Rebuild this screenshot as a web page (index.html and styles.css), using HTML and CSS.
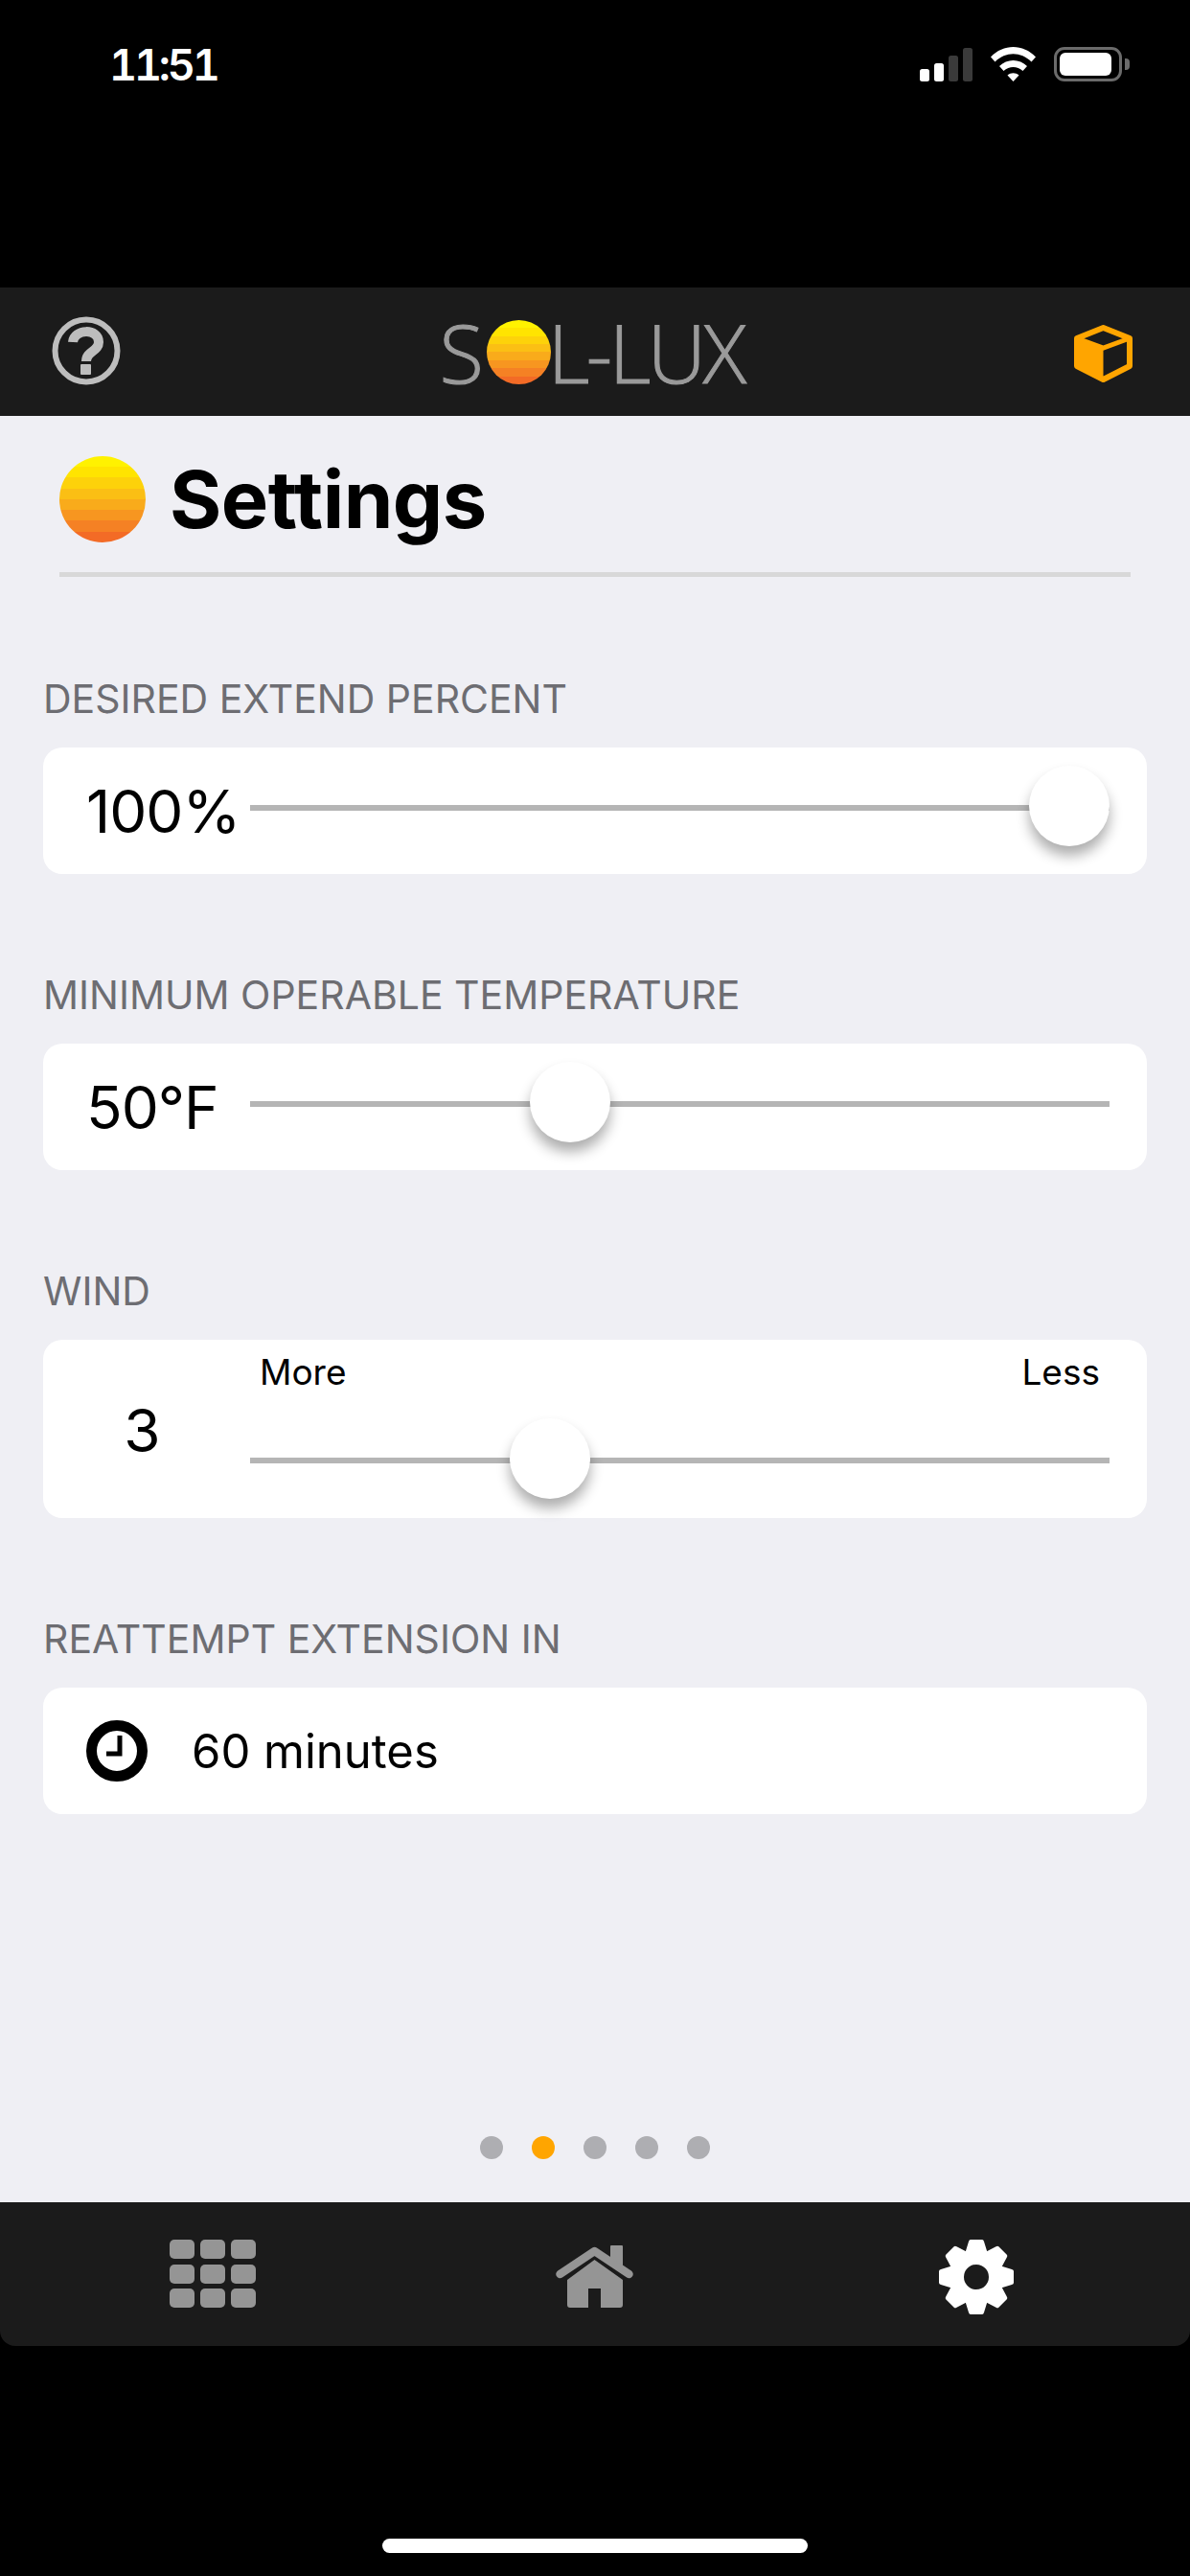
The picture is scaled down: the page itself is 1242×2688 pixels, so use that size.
FILE: index.html
```html
<!DOCTYPE html>
<html lang="en">
<head>
<meta charset="utf-8">
<title>Sol-Lux Settings</title>
<link rel="stylesheet" href="styles.css">
</head>
<body>
<div class="phone">
  <div class="status">
    <span class="time">11:51</span>
    <div class="status-icons">
      <div class="signal"><i class="b1"></i><i class="b2"></i><i class="b3"></i><i class="b4"></i></div>
      <svg class="wifi" width="47" height="36" viewBox="0 0 47 36"><path d="M0 10.5C13 -3.5 34 -3.5 47 10.5L42.5 15.5C31.5 4.5 15.5 4.5 4.5 15.5Z" fill="#fff"/><path d="M9 20C17 12 30 12 38 20L33.5 25C27.5 19.5 19.5 19.5 13.5 25Z" fill="#fff"/><path d="M17.5 29.5C21 26.5 26 26.5 29.5 29.5L23.5 36Z" fill="#fff"/></svg>
      <div class="battery"><div class="battery-fill"></div></div>
      <div class="battery-cap"></div>
    </div>
  </div>

  <header class="topbar">
    <svg class="help" width="72" height="72" viewBox="0 0 72 72"><circle cx="36" cy="36" r="32.5" fill="none" stroke="#bdbdbd" stroke-width="6"/><path d="M22 27C23 13 49 12 49 27C49 37 36 36 36 47" fill="none" stroke="#bdbdbd" stroke-width="10"/><rect x="30" y="50" width="11" height="11" rx="1" fill="#bdbdbd"/></svg>
    <div class="logo">
      <span class="logo-s">S</span><span class="sun sun-small"></span><span class="logo-rest">L-LUX</span>
    </div>
    <svg class="cube" width="61" height="60" viewBox="0 0 61 60"><path d="M30.5 3L58 14V43L30.5 57L3 43V14Z" fill="none" stroke="#ffa500" stroke-width="6" stroke-linejoin="round"/><path d="M3 14L30.5 24V57L3 43Z" fill="#ffa500"/><path d="M3 14L30.5 24L58 14" fill="none" stroke="#ffa500" stroke-width="5"/></svg>
  </header>

  <main class="content">
    <div class="title-row">
      <span class="sun sun-large"></span>
      <h1 class="title">Settings</h1>
    </div>

    <section class="group">
      <h2 class="group-label">DESIRED EXTEND PERCENT</h2>
      <div class="card">
        <span class="value">100%</span>
        <div class="slider"><div class="track"></div><div class="thumb" style="left: 100%"></div></div>
      </div>
    </section>

    <section class="group">
      <h2 class="group-label">MINIMUM OPERABLE TEMPERATURE</h2>
      <div class="card">
        <span class="value">50°F</span>
        <div class="slider"><div class="track"></div><div class="thumb" style="left: 41.9%"></div></div>
      </div>
    </section>

    <section class="group">
      <h2 class="group-label">WIND</h2>
      <div class="card card-wind">
        <span class="value value-center">3</span>
        <div class="wind-col">
          <div class="wind-ends"><span>More</span><span>Less</span></div>
          <div class="slider"><div class="track"></div><div class="thumb" style="left: 39.6%"></div></div>
        </div>
      </div>
    </section>

    <section class="group">
      <h2 class="group-label">REATTEMPT EXTENSION IN</h2>
      <div class="card card-time">
        <svg class="clock" width="64" height="64" viewBox="0 0 64 64"><circle cx="32" cy="32" r="26.5" fill="none" stroke="#000" stroke-width="11"/><path d="M35 16V35H21" fill="none" stroke="#000" stroke-width="5"/></svg>
        <span class="time-value">60 minutes</span>
      </div>
    </section>

    <div class="dots"><i class="dot"></i><i class="dot dot-on"></i><i class="dot"></i><i class="dot"></i><i class="dot"></i></div>
  </main>

  <nav class="tabbar">
    <svg class="tab" width="90" height="72" viewBox="0 0 90 72" fill="#959595">
      <rect x="0" y="0" width="26" height="20" rx="5"/><rect x="32" y="0" width="26" height="20" rx="5"/><rect x="64" y="0" width="26" height="20" rx="5"/>
      <rect x="0" y="26" width="26" height="20" rx="5"/><rect x="32" y="26" width="26" height="20" rx="5"/><rect x="64" y="26" width="26" height="20" rx="5"/>
      <rect x="0" y="51" width="26" height="20" rx="5"/><rect x="32" y="51" width="26" height="20" rx="5"/><rect x="64" y="51" width="26" height="20" rx="5"/>
    </svg>
    <svg class="tab tab-home" width="81" height="65" viewBox="0 0 81 65" fill="#959595">
      <rect x="57" y="0" width="13" height="22" rx="1"/>
      <path d="M4.5 30L40.5 6L76.5 30" fill="none" stroke="#959595" stroke-width="8.5" stroke-linecap="round" stroke-linejoin="round"/>
      <path d="M12 36L40.5 15L70 36V62Q70 65 67 65H47V45H34V65H15Q12 65 12 62Z"/>
    </svg>
    <svg class="tab tab-gear" width="78" height="78" viewBox="-39 -39 78 78" fill="#fff">
      <circle r="20.5" fill="none" stroke="#fff" stroke-width="15"/>
      <path id="tooth" d="M-12 -24L-8 -37Q-7.5 -39 -6 -39H6Q7.5 -39 8 -37L12 -24Z"/>
      <use href="#tooth" transform="rotate(45)"/><use href="#tooth" transform="rotate(90)"/><use href="#tooth" transform="rotate(135)"/>
      <use href="#tooth" transform="rotate(180)"/><use href="#tooth" transform="rotate(225)"/><use href="#tooth" transform="rotate(270)"/><use href="#tooth" transform="rotate(315)"/>
    </svg>
  </nav>

  <div class="home-area"><div class="home-indicator"></div></div>
</div>
</body>
</html>
```
FILE: styles.css
```css
* { box-sizing: border-box; }
html, body { margin: 0; padding: 0; background: #000; }
.phone {
  width: 1242px;
  height: 2688px;
  background: #000;
  display: flex;
  flex-direction: column;
  font-family: Inter, "Liberation Sans", sans-serif;
  color: #000;
}

/* status bar */
.status {
  height: 300px;
  flex: none;
  display: flex;
  justify-content: space-between;
  align-items: flex-start;
  padding: 49px 63px 0 114px;
  color: #fff;
}
.time { font-size: 45px; line-height: 37px; font-weight: 600; font-variant-numeric: tabular-nums; letter-spacing: -3.2px; }
.status-icons { display: flex; align-items: flex-start; }
.signal { display: flex; align-items: flex-end; gap: 5px; height: 36px; margin-right: 19px; }
.signal i { display: block; width: 10px; border-radius: 2.5px; background: #fff; }
.signal .b1 { height: 13px; }
.signal .b2 { height: 19px; }
.signal .b3 { height: 27px; background: #3a3a3a; }
.signal .b4 { height: 35px; background: #3a3a3a; }
.wifi { margin-right: 19px; }
.battery {
  width: 71px;
  height: 36px;
  border: 3.5px solid #6b6b6b;
  border-radius: 11px;
  padding: 3px;
}
.battery-fill { width: 54px; height: 100%; background: #fff; border-radius: 6px; }
.battery-cap { width: 5px; height: 12px; margin: 12px 0 0 3px; background: #6b6b6b; border-radius: 0 4px 4px 0; }

/* top bar */
.topbar {
  height: 134px;
  flex: none;
  background: #1b1b1b;
  display: grid;
  grid-template-columns: 1fr auto 1fr;
  align-items: center;
  padding: 0 60px 0 54px;
}
.help { justify-self: start; margin-top: -3px; }
.cube { justify-self: end; margin-top: 3px; }
.logo {
  display: flex;
  align-items: center;
  color: #9a9a9a;
  font-family: "Open Sans", Lato, sans-serif;
  font-weight: 300;
  font-size: 85px;
  line-height: 67px;
  -webkit-text-stroke: 1px #9a9a9a;
  margin-left: -2px;
}
.logo-s { margin-right: 5px; letter-spacing: -2px; }
.logo-rest { margin-left: -3px; letter-spacing: -3.5px; }
.sun {
  display: block;
  flex: none;
  border-radius: 50%;
  background: linear-gradient(to bottom,
    #fff200 0 12.5%, #ffe400 12.5% 25%, #fdd20a 25% 37.5%, #fbbf14 37.5% 50%,
    #f9ab1b 50% 62.5%, #f79620 62.5% 75%, #f58124 75% 87.5%, #f36b26 87.5% 100%);
}
.sun-small { width: 67px; height: 67px; }
.sun-large { width: 90px; height: 90px; }

/* main */
.content {
  height: 1864px;
  flex: none;
  background: #efeff4;
  padding: 0 45px;
  display: flex;
  flex-direction: column;
}
.title-row {
  margin: 0 17px;
  height: 168px;
  padding-top: 42px;
  border-bottom: 5px solid #d8d8d8;
  display: flex;
  align-items: flex-start;
  gap: 25px;
}
.title { margin: 0; font-size: 83px; line-height: 91px; font-weight: 700; letter-spacing: -0.5px; }
.group { margin-top: 100px; }
.title-row + .group { margin-top: 101px; }
.group-label {
  margin: 0 0 27px;
  height: 50px;
  line-height: 52px;
  font-size: 41px;
  font-weight: 400;
  color: #6d6d72;
}
.card {
  background: #fff;
  border-radius: 20px;
  height: 132px;
  display: flex;
  padding: 19px 39px 0 45px;
}
.value { width: 171px; flex: none; font-size: 62px; line-height: 96px; font-weight: 400; letter-spacing: -1px; }
.slider { position: relative; flex: 1; height: 84px; }
.track { position: absolute; left: 0; right: 0; top: 41px; height: 6px; background: #b5b5b5; }
.thumb {
  position: absolute;
  top: 0;
  width: 84px;
  height: 84px;
  margin-left: -84px;
  border-radius: 50%;
  background: #fff;
  box-shadow: 0 10px 14px rgba(0, 0, 0, .32);
}
.card-wind { height: 186px; padding: 9px 39px 0 0; }
.value-center { width: 206px; margin-right: 10px; margin-top: 38px; text-align: center; }
.wind-col { flex: 1; display: flex; flex-direction: column; }
.wind-ends {
  display: flex;
  justify-content: space-between;
  height: 46px;
  line-height: 50px;
  margin-bottom: 27px;
  padding: 0 10px;
  font-size: 37px;
}
.card-time { align-items: center; padding: 0 45px; }
.clock { flex: none; margin-right: 46px; }
.time-value { font-size: 49px; line-height: 60px; padding-top: 2px; }

.dots {
  margin-top: auto;
  margin-bottom: 45px;
  display: flex;
  justify-content: center;
  gap: 30px;
}
.dot { display: block; width: 24px; height: 24px; border-radius: 50%; background: #aeaeb2; }
.dot-on { background: #ffa500; }

/* bottom bar */
.tabbar {
  height: 150px;
  flex: none;
  background: #1b1b1b;
  border-radius: 0 0 16px 16px;
  display: flex;
  align-items: flex-start;
  gap: 313px;
  padding: 39px 0 0 177px;
}
.tab { flex: none; }
.tab-home { margin-top: 6px; }
.tab-gear { margin-left: 6px; }

.home-area { flex: 1; display: flex; justify-content: center; padding-top: 201px; }
.home-indicator { width: 444px; height: 15px; border-radius: 8px; background: #fff; }
```
